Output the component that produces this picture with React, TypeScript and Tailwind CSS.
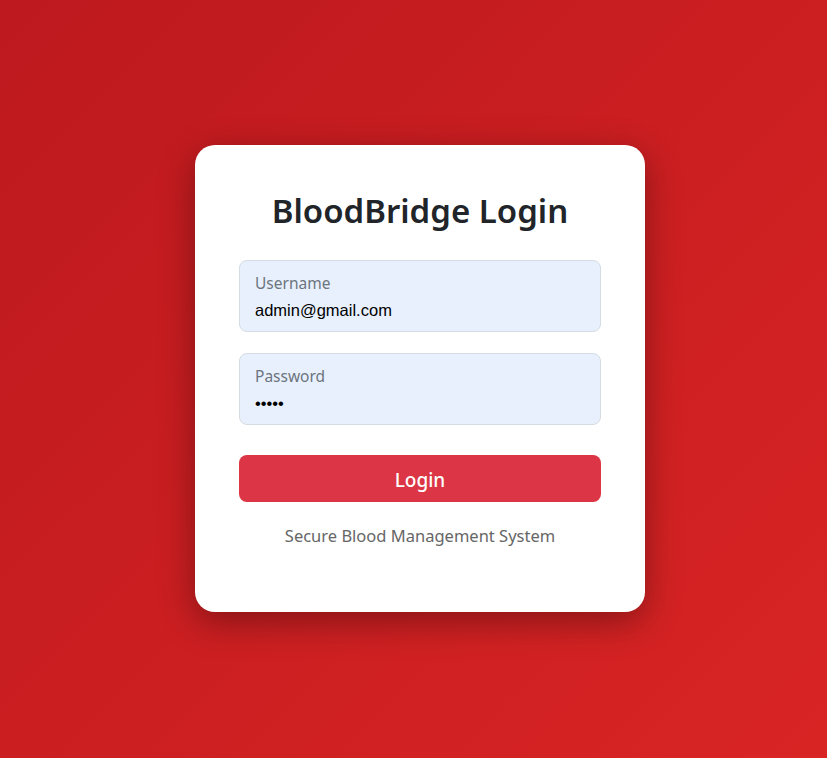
import React from "react";

const font = { fontFamily: '"Noto Sans", "Open Sans", sans-serif' };

const Field = ({ label, value }: { label: string; value: string }) => (
  <div className="h-[72px] rounded-lg border border-[#d5dbe3] bg-[#e8f0fe] px-[15px] pt-[10px]">
    <div className="text-[15.5px] leading-[24px] text-[#6c757d]">{label}</div>
    <div
      className="mt-[3px] text-[16.5px] leading-[24px] text-black"
      style={{ fontFamily: '"Liberation Sans", Arial, sans-serif' }}
    >
      {value}
    </div>
  </div>
);

const App = () => {
  return (
    <div
      className="flex min-h-[758px] w-full items-center justify-center bg-linear-135 from-[#bd191e] to-[#d92424] pb-[2px] pl-[13px]"
      style={font}
    >
      <div className="w-[450px] rounded-[20px] bg-white px-[44px] pt-[44px] pb-[64px] shadow-[0_10px_35px_rgba(0,0,0,0.35)]">
        <h1 className="mb-[27px] text-center text-[33px] font-semibold leading-[44px] text-[#212529]">
          BloodBridge Login
        </h1>
        <div className="flex flex-col gap-[21px]">
          <Field label="Username" value="admin@gmail.com" />
          <Field label="Password" value="•••••" />
        </div>
        <button className="mt-[30px] h-[47px] w-full rounded-lg bg-[#dc3545] pt-[4px] text-[19px] font-medium text-white">
          Login
        </button>
        <p className="mt-[22px] text-center text-[16.5px] leading-[24px] text-[#666666]">
          Secure Blood Management System
        </p>
      </div>
    </div>
  );
};

export default App;
